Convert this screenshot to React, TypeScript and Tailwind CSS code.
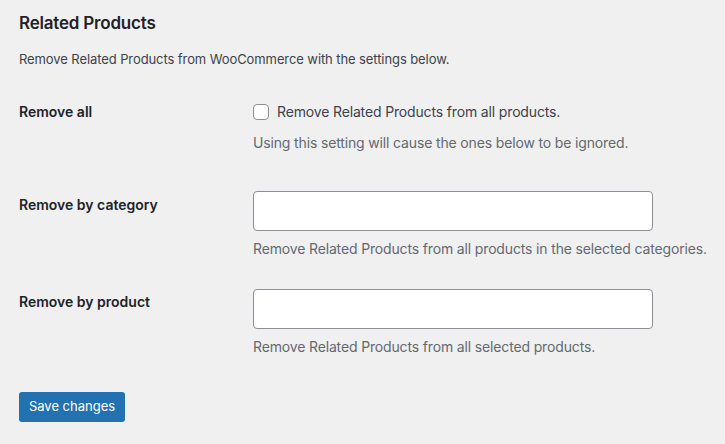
const font = { fontFamily: 'Inter, "Noto Sans", sans-serif' };

function Row({ label, labelTop, children, className }: { label: string; labelTop: string; children: React.ReactNode; className?: string }) {
  return (
    <div className={`flex ${className ?? ''}`}>
      <div className={`w-[234px] shrink-0 text-[14px] leading-5 font-semibold text-[#1d2327] ${labelTop}`}>{label}</div>
      <div className="flex flex-col">{children}</div>
    </div>
  );
}

function Description({ text }: { text: string }) {
  return <p className="whitespace-nowrap text-[14px] leading-5 tracking-[-0.15px] text-[#646970]">{text}</p>;
}

export default function App() {
  return (
    <div className="min-h-screen w-full bg-[#f0f0f1] px-[19px] pt-[12px]" style={font}>
      <h2 className="text-[17px] leading-[22px] font-semibold tracking-[-0.2px] text-[#1d2327]">Related Products</h2>
      <p className="mt-[16px] whitespace-nowrap text-[13px] leading-[18px] tracking-[-0.09px] text-[#3c434a]">
        Remove Related Products from WooCommerce with the settings below.
      </p>

      <Row label="Remove all" labelTop="" className="mt-[34px]">
        <label className="flex items-center gap-2 whitespace-nowrap text-[14px] leading-5 tracking-[-0.15px] text-[#3c434a]">
          <span className="h-4 w-4 rounded-[4px] border border-[#8c8f94] bg-white" />
          Remove Related Products from all products.
        </label>
        <div className="mt-[11px]">
          <Description text="Using this setting will cause the ones below to be ignored." />
        </div>
      </Row>

      <Row label="Remove by category" labelTop="pt-1" className="mt-[38px]">
        <div className="h-10 w-[400px] rounded-[4px] border border-[#8c8f94] bg-white" />
        <div className="mt-2">
          <Description text="Remove Related Products from all products in the selected categories." />
        </div>
      </Row>

      <Row label="Remove by product" labelTop="pt-[3px]" className="mt-[30px]">
        <div className="h-10 w-[400px] rounded-[4px] border border-[#8c8f94] bg-white" />
        <div className="mt-2">
          <Description text="Remove Related Products from all selected products." />
        </div>
      </Row>

      <button className="mt-[35px] h-[30px] w-[106px] rounded-[3px] bg-[#2271b1] text-[13px] text-white">
        Save changes
      </button>
    </div>
  );
}
